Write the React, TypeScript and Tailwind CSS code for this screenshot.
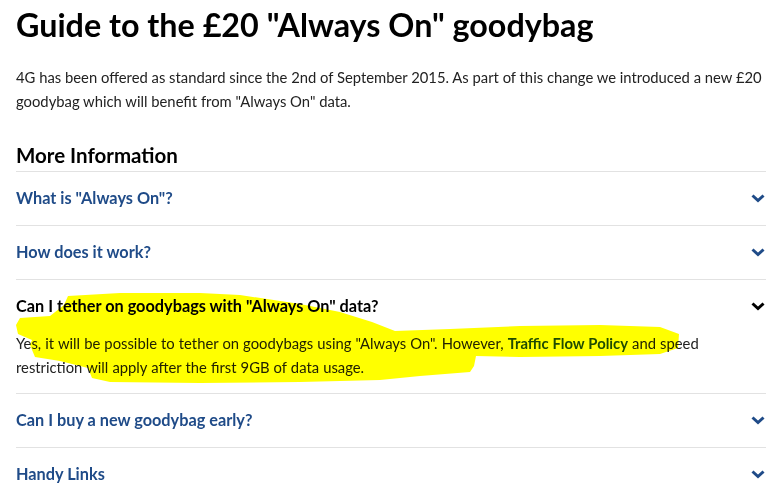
import { useState } from "react";

type faqProps = {
  id: number;
  question: string;
};

const faqs: faqProps[] = [
  { id: 1, question: 'What is "Always On"?' },
  { id: 2, question: "How does it work?" },
  { id: 3, question: 'Can I tether on goodybags with "Always On" data?' },
  { id: 4, question: "Can I buy a new goodybag early?" },
  { id: 5, question: "Handy Links" },
];

function Chevron({ open }: { open: boolean }) {
  return (
    <svg
      width="14"
      height="9"
      viewBox="0 0 14 9"
      className={open ? "text-black" : "text-[#1f4b88]"}
    >
      <polyline
        points="1.5,1.5 7,6.5 12.5,1.5"
        fill="none"
        stroke="currentColor"
        strokeWidth="3"
      />
    </svg>
  );
}

export default function App(): JSX.Element {
  const [open, setOpen] = useState<number>(3);

  return (
    <div
      className="relative w-[780px] h-[486px] overflow-hidden bg-white px-4"
      style={{ fontFamily: "Lato, 'Liberation Sans', sans-serif" }}
    >
      <h1 className="pt-[6px] text-[32.3px] leading-[1.2] font-bold text-black">
        Guide to the £20 "Always On" goodybag
      </h1>

      <p className="mt-[20px] w-[750px] text-[14.8px] leading-6 text-[#222]">
        4G has been offered as standard since the 2nd of September 2015. As
        part of this change we introduced a new £20 goodybag which will benefit
        from "Always On" data.
      </p>

      <h2 className="mt-[29px] text-[20.5px] leading-[26px] font-bold text-black pb-[3px]">
        More Information
      </h2>

      <ul className="w-[750px] border-t border-[#e2e2e2]">
        {faqs.map((faq: faqProps) => (
          <li key={faq.id} className="border-b border-[#e2e2e2]">
            <button
              onClick={() => setOpen(open === faq.id ? 0 : faq.id)}
              className={`w-full flex items-center justify-between pr-[1px] text-left cursor-pointer
                ${open === faq.id ? "h-[51px] pt-[2px] text-black" : "h-[53px] text-[#1f4b88]"}`}
            >
              <span className="text-[16.3px] font-bold">{faq.question}</span>
              <Chevron open={open === faq.id} />
            </button>
            {open === faq.id && faq.id === 3 && (
              <p className="pb-[14px] text-[14.8px] leading-6 text-[#222] [word-spacing:0.3px]">
                Yes, it will be possible to tether on goodybags using "Always
                On". However,{" "}
                <a href="#" className="font-bold text-[#1f4b88]">
                  Traffic Flow Policy
                </a>{" "}
                and speed restriction will apply after the first 9GB of data
                usage.
              </p>
            )}
          </li>
        ))}
      </ul>

      {/* highlighter scribble over the expanded answer */}
      <svg
        className="absolute left-0 top-0 pointer-events-none mix-blend-multiply"
        width="780"
        height="486"
        viewBox="0 0 780 486"
      >
        <polygon
          fill="#ffff00"
          points="68,296 120,293 200,293 240,295 300,304 340,312 372,322 395,331 450,329 520,326 600,325 660,327 679,334 678,348 660,354 600,356 520,357 476,356 474,366 470,372 420,376 380,380 300,382 200,383 110,382 92,378 88,368 60,361 35,357 30,345 32,340 18,334 16,325 20,318 50,316 64,305"
        />
      </svg>
    </div>
  );
}
